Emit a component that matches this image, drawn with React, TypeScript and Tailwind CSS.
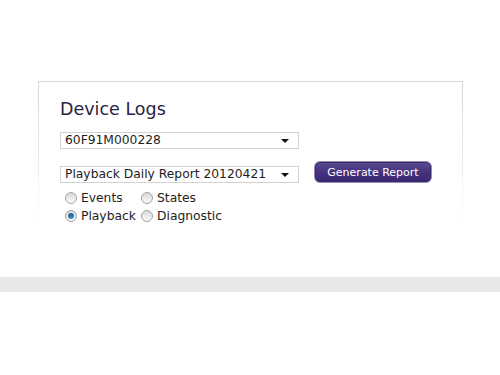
import React from "react"

function Radio(props: { label: string; checked?: boolean }) {
    const { label, checked } = props
    return (
        <label className="flex items-center h-[18px] whitespace-nowrap">
            <span className="w-[12px] h-[12px] rounded-full border border-[#a3a3a3] bg-gradient-to-b from-[#d9d9d9] to-[#fbfbfb] flex items-center justify-center mr-[4px]">
                {checked && <span className="w-[6px] h-[6px] rounded-full bg-gradient-to-b from-[#1d5f95] to-[#3f91c9]" />}
            </span>
            <span>{label}</span>
        </label>
    )
}

function Select(props: { value: string }) {
    return (
        <div className="w-[239px] h-[17px] border border-[#d2d2d2] bg-white flex items-center justify-between pl-[4px] pr-[9px]">
            <span className="leading-none">{props.value}</span>
            <span className="w-0 h-0 border-l-[4px] border-r-[4px] border-t-[4px] border-l-transparent border-r-transparent border-t-[#111]" />
        </div>
    )
}

export default function App() {
    return (
        <div className="min-h-[375px] bg-white text-[#1e1e1e] text-[12.3px] pt-[81px]" style={{ fontFamily: '"DejaVu Sans", Verdana, sans-serif' }}>
            {/* card with a border that fades out downward */}
            <div className="ml-[38px] w-[425px] h-[140px] px-px pt-px bg-gradient-to-b from-[#d6d6d6] via-[#e8e8e8] to-white">
                <div className="h-full bg-white pl-[21px] pt-[17px]">
                    <h1 className="text-[17.5px] leading-[20px] text-[#2b2143]">Device Logs</h1>
                    <div className="mt-[13px]">
                        <Select value="60F91M000228" />
                    </div>
                    <div className="mt-[12px] flex items-start">
                        <div className="mt-[5px]">
                            <Select value="Playback Daily Report 20120421" />
                        </div>
                        <button className="ml-[15px] w-[118px] h-[22px] rounded-[6px] border border-[#948ab0] bg-gradient-to-b from-[#5d4b93] via-[#46327e] to-[#3a2670] text-white text-[11px] leading-none shadow-[inset_0_0_0_1px_#3a2a66]">
                            Generate Report
                        </button>
                    </div>
                    <div className="mt-[6px] ml-[5px] grid grid-cols-[76px_auto] w-fit">
                        <Radio label="Events" />
                        <Radio label="States" />
                        <Radio label="Playback" checked />
                        <Radio label="Diagnostic" />
                    </div>
                </div>
            </div>
            <div className="mt-[56px] h-[15px] bg-[#e8e8e8]" />
        </div>
    )
}
